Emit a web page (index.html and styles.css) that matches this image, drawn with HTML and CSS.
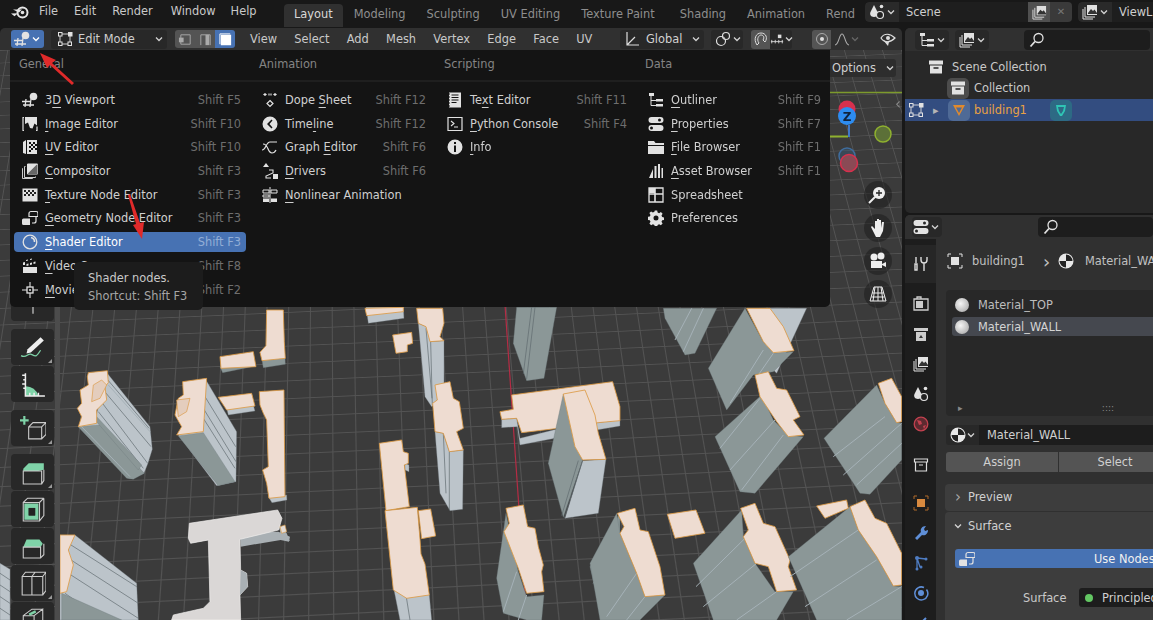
FILE: index.html
```html
<!DOCTYPE html>
<html lang="en">
<head>
<meta charset="utf-8">
<title>Blender</title>
<link rel="stylesheet" href="styles.css">
</head>
<body>
<svg class="defs" width="0" height="0">
  <defs>
    <symbol id="i-view" viewBox="0 0 16 16"><path d="M1 13h11M0 9.500h9M4 7l-1 8M9 7l-1 8" fill="none" stroke="currentColor" stroke-width="1.300"/><circle cx="11.500" cy="4.500" r="3.800" fill="currentColor"/></symbol>
    <symbol id="i-image" viewBox="0 0 16 16"><path d="M2 1.500H1v13h1M14 14.500h1v-4" fill="none" stroke="currentColor" stroke-width="1.200"/><path d="M3 1h12v8.500l-2.500-2-2 5-2.500-.5L6 6.500 3 8z" fill="currentColor"/></symbol>
    <symbol id="i-uv" viewBox="0 0 16 16"><path d="M1 3l3-2v14l-3-1z" fill="currentColor"/><path d="M5 1h10v14H5z" fill="currentColor"/><path d="M7 3h2v2H7zM11 3h2v2h-2zM9 5h2v2H9zM13 5h2v2h-2zM7 7h2v2H7zM11 7h2v2h-2zM9 9h2v2H9zM13 9h2v2h-2zM7 11h2v2H7z" fill="#111"/></symbol>
    <symbol id="i-comp" viewBox="0 0 16 16"><path d="M5.500 1h10v10h-10z" fill="#111" stroke="currentColor"/><path d="M5.500 11L15.500 1v10z" fill="#666"/><path d="M5.500 11V1h10z" fill="currentColor"/><path d="M3.500 3.500h-1v11h11v-1M1 5.500H.5v10h10V15" fill="none" stroke="currentColor" stroke-width=".9"/></symbol>
    <symbol id="i-tex" viewBox="0 0 16 16"><path d="M.5 1.500h15v13H.5z" fill="currentColor"/><path d="M2 3h2v2H2zM6 3h2v2H6zM10 3h2v2h-2zM4 5h2v2H4zM8 5h2v2H8zM12 5h2v2h-2zM2 7h2v2H2zM6 7h2v2H6zM10 7h2v2h-2z" fill="#222"/></symbol>
    <symbol id="i-geo" viewBox="0 0 16 16"><path d="M7 3.500a2 2 0 012-2h5a2 2 0 012 2v3H7z" fill="none" stroke="currentColor" stroke-width="1.200"/><path d="M0 10a1.500 1.500 0 011.500-1.500H8V15H1.500A1.500 1.500 0 010 13.500z" fill="currentColor"/><path d="M14 7v4a2 2 0 01-2 2h-2" fill="none" stroke="currentColor" stroke-width="1.200"/></symbol>
    <symbol id="i-shader" viewBox="0 0 16 16"><circle cx="8" cy="8" r="6.800" fill="none" stroke="currentColor" stroke-width="1.300"/><path d="M9 3.500a4.500 4.500 0 013.500 4.500" fill="none" stroke="currentColor" stroke-width="1.600"/></symbol>
    <symbol id="i-video" viewBox="0 0 16 16"><path d="M1 9h14v6H1z" fill="currentColor"/><path d="M1 7V4.500L3 4v3zM4.500 6l2-.5v2l-2 .5zM8 5l2-.5v2l-2 .5zM11.500 4l2-.5v2l-2 .5z" fill="currentColor"/><path d="M4 2.500l2-.5M8 1.500l2-.5" stroke="currentColor"/></symbol>
    <symbol id="i-movie" viewBox="0 0 16 16"><rect x="5" y="5" width="6" height="6" fill="none" stroke="currentColor" stroke-width="1.300"/><path d="M8 0v5M8 11v5M0 8h5M11 8h5" stroke="currentColor" stroke-width="1.100"/><circle cx="8" cy="8" r="1" fill="currentColor"/></symbol>
    <symbol id="i-dope" viewBox="0 0 16 16"><path d="M3 1l2 1.500L3 4 1 2.500zM13 1l2 1.500L13 4l-2-1.500z" fill="currentColor"/><path d="M6 1.500h4v2H6z" fill="#888"/><path d="M8 8.500l3 3-3 3-3-3z" fill="none" stroke="currentColor" stroke-width="1.200"/></symbol>
    <symbol id="i-time" viewBox="0 0 16 16"><path fill-rule="evenodd" d="M8 .5a7.500 7.500 0 100 15 7.500 7.500 0 000-15zM9.500 3.500L5 8l4.500 4.500 1-1L7.500 8l3-3.500z" fill="currentColor"/></symbol>
    <symbol id="i-graph" viewBox="0 0 16 16"><path d="M0 11c4 0 4-8 8-8h7M1 5c6 0 4 9 9 9 2 0 3-1 4-3" fill="none" stroke="currentColor" stroke-width="1.200"/></symbol>
    <symbol id="i-driver" viewBox="0 0 16 16"><path d="M4 0l3 4H1z" fill="currentColor"/><rect x="11" y="11" width="5" height="5" fill="currentColor"/><path d="M7 7h4v3l-7 3v2h5" fill="none" stroke="currentColor" stroke-width="1.100"/></symbol>
    <symbol id="i-nla" viewBox="0 0 16 16"><path d="M1 3h6v3H1zM9 3h6v3H9z" fill="none" stroke="currentColor"/><path d="M8 0v16" stroke="currentColor"/><path d="M1 8h6v2H1z" fill="none" stroke="currentColor"/><path d="M1 11.500h6V15H1zM9 11.500h6V15H9z" fill="currentColor"/></symbol>
    <symbol id="i-text" viewBox="0 0 16 16"><path d="M2 .5h12v15H2z" fill="currentColor"/><path d="M4.500 3h7M4.500 5.500h7M4.500 8h7M4.500 10.500h5" stroke="#111" stroke-width="1.100"/><path d="M2 2h1M2 5h1M2 8h1M2 11h1M2 14h1" stroke="#111"/></symbol>
    <symbol id="i-py" viewBox="0 0 16 16"><path d="M1 1.500h14v13H1z" fill="none" stroke="currentColor" stroke-width="1.200"/><path d="M4 5l3 2.500L4 10M7 11h4" fill="none" stroke="currentColor" stroke-width="1.100"/></symbol>
    <symbol id="i-info" viewBox="0 0 16 16"><path fill-rule="evenodd" d="M8 .5a7.500 7.500 0 100 15 7.500 7.500 0 000-15zM7 3h2v2H7zM7 6.500h2V13H7z" fill="currentColor"/></symbol>
    <symbol id="i-outl" viewBox="0 0 16 16"><path d="M1 1h5v3H1zM8 7h7v2.500H8zM8 12h7v2.500H8z" fill="currentColor"/><path d="M3 4v9.500h5M3 8.500h5" fill="none" stroke="currentColor"/></symbol>
    <symbol id="i-prop" viewBox="0 0 16 16"><path fill-rule="evenodd" d="M3.500 1h9a3 3 0 010 6h-9a3 3 0 010-6zM11.500 2.500a1.500 1.500 0 100 3 1.500 1.500 0 000-3zM3.500 9h9a3 3 0 010 6h-9a3 3 0 010-6zM3.500 10.500a1.500 1.500 0 100 3 1.500 1.500 0 000-3z" fill="currentColor"/></symbol>
    <symbol id="i-file" viewBox="0 0 16 16"><path d="M0 2h6l1.500 2H16v2H0zM0 7h16v8H0z" fill="currentColor"/></symbol>
    <symbol id="i-asset" viewBox="0 0 16 16"><path d="M1 15l4-9v9zM6.500 15V3h2v12zM10 15V1h2v14zM13.500 15V5H15v10z" fill="currentColor"/></symbol>
    <symbol id="i-sheet" viewBox="0 0 16 16"><path d="M1 1h14v14H1z" fill="none" stroke="currentColor" stroke-width="1.300"/><path d="M1 1h6v5H1z" fill="currentColor"/><path d="M1 7h14M7 1v14" stroke="currentColor" stroke-width="1.600"/></symbol>
    <symbol id="i-gear" viewBox="0 0 16 16"><path fill-rule="evenodd" d="M6.800.5h2.400l.4 2 1.500.7 1.800-1.100 1.700 1.700-1.100 1.800.7 1.500 2 .4v2.400l-2 .4-.7 1.500 1.100 1.800-1.700 1.700-1.800-1.100-1.500.7-.4 2H6.800l-.4-2-1.500-.7-1.800 1.100-1.700-1.700 1.100-1.800-.7-1.500-2-.4V6.800l2-.4.7-1.500-1.100-1.800 1.700-1.700 1.800 1.100 1.500-.7zM8 5.500a2.500 2.500 0 100 5 2.500 2.500 0 000-5z" fill="currentColor"/></symbol>
    <symbol id="i-chev" viewBox="0 0 10 10"><path d="M2 3.500L5 6.500 8 3.500" fill="none" stroke="currentColor" stroke-width="1.300"/></symbol>
    <symbol id="i-edit" viewBox="0 0 16 16"><path d="M5 3h6M5 13h6M3 5v6M13 5v6" stroke="currentColor" stroke-width=".9"/><rect x="1.500" y="1.500" width="3.500" height="3.500" fill="none" stroke="currentColor"/><rect x="11" y="1" width="4.500" height="4.500" fill="currentColor"/><rect x="1.500" y="11" width="3.500" height="3.500" fill="none" stroke="currentColor"/><rect x="11" y="11" width="3.500" height="3.500" fill="none" stroke="currentColor"/></symbol>
    <symbol id="i-obj" viewBox="0 0 16 16"><rect x="4" y="4" width="8" height="8" fill="currentColor"/><path d="M1 4V1h3M12 1h3v3M15 12v3h-3M4 15H1v-3" fill="none" stroke="currentColor"/></symbol>
    <symbol id="i-coll" viewBox="0 0 16 16"><path d="M1 1.500h14v4H1z" fill="currentColor"/><path d="M2 6.500h12v8H2z" fill="currentColor"/><path d="M5.500 9h5" stroke="#222" stroke-width="1.300"/></symbol>
    <symbol id="i-search" viewBox="0 0 16 16"><circle cx="9.500" cy="6" r="4.500" fill="none" stroke="currentColor" stroke-width="1.300"/><path d="M6 9.500L1.500 14.500" stroke="currentColor" stroke-width="1.800"/></symbol>
    <symbol id="i-layers" viewBox="0 0 16 16"><path d="M1 5v10h10M3 3v10h10" fill="none" stroke="currentColor"/><path d="M5 1h10v10H5z" fill="currentColor"/><path d="M6 9l3-4 2 2 1.500-1.500L15 9v1H6z" fill="#333"/></symbol>
    <symbol id="i-scene" viewBox="0 0 16 16"><path d="M5 1l3.500 7c1 2 0 5-3.500 5S.5 10 1.500 8z" fill="currentColor"/><circle cx="11" cy="11" r="3.500" fill="#222" stroke="currentColor" stroke-width="1.200"/><circle cx="12.500" cy="2.500" r="1.800" fill="currentColor"/></symbol>
    <symbol id="i-mat" viewBox="0 0 16 16"><circle cx="8" cy="8" r="7.500" fill="#e8e8e8"/><path d="M8 8h6.500A6.500 6.500 0 008 1.500zM8 8H1.500A6.500 6.500 0 008 14.500z" fill="#232323"/></symbol>
  </defs>
</svg>

<div class="app">
  <header class="topbar">
    <svg class="logo" viewBox="0 0 20 16"><circle cx="12.500" cy="8.500" r="5" fill="none" stroke="#e6e6e6" stroke-width="2"/><circle cx="12.500" cy="8.500" r="1.800" fill="#e6e6e6"/><path d="M1 9.500l7-.2-3.500 3zM3 5.500h9l-3 3z" fill="#e6e6e6"/></svg>
    <nav class="appmenu"><span>File</span><span>Edit</span><span>Render</span><span class="win">Window</span><span>Help</span></nav>
    <nav class="tabs">
      <span class="tab active">Layout</span><span class="tab">Modeling</span><span class="tab">Sculpting</span><span class="tab">UV Editing</span><span class="tab wide">Texture Paint</span><span class="tab">Shading</span><span class="tab">Animation</span><span class="tab">Rend</span>
    </nav>
    <div class="scenebox">
      <span class="iconbtn w34"><svg class="ic"><use href="#i-scene"/></svg><svg class="chev"><use href="#i-chev"/></svg></span>
      <span class="field w129">Scene</span>
      <span class="copy"><svg class="ic14"><use href="#i-layers"/></svg></span>
      <span class="close">✕</span>
    </div>
    <div class="scenebox second">
      <span class="iconbtn w34"><svg class="ic"><use href="#i-layers"/></svg><svg class="chev"><use href="#i-chev"/></svg></span>
      <span class="field grow">ViewL</span>
    </div>
  </header>

  <div class="main">
    <section class="viewport">
      <div class="vphead">
        <span class="edbtn"><svg class="ic"><use href="#i-view"/></svg><svg class="chev"><use href="#i-chev"/></svg></span>
        <span class="mode"><svg class="ic"><use href="#i-edit"/></svg><span class="modelabel">Edit Mode</span><svg class="chev"><use href="#i-chev"/></svg></span>
        <span class="selmodes">
          <i class="sm"><svg viewBox="0 0 16 16"><path d="M3 3h10v10H3z" fill="none" stroke="currentColor"/><rect x="1" y="6" width="5" height="5" fill="currentColor"/></svg></i>
          <i class="sm"><svg viewBox="0 0 16 16"><path d="M3 14V3h10v11" fill="none" stroke="currentColor"/><rect x="8" y="3" width="4" height="11" fill="currentColor"/></svg></i>
          <i class="sm on"><svg viewBox="0 0 16 16"><path d="M3 3h11v11H3z" fill="#fff"/><path d="M2 13V2h11" fill="none" stroke="#fff"/></svg></i>
        </span>
        <nav class="vpmenu"><span>View</span><span>Select</span><span>Add</span><span>Mesh</span><span>Vertex</span><span>Edge</span><span>Face</span><span>UV</span></nav>
        <span class="drop global"><svg class="ic"><path d="M3 1v13h12M3 14l8-8" fill="none" stroke="#ddd" stroke-width="1.200"/></svg><span>Global</span><svg class="chev"><use href="#i-chev"/></svg></span>
        <span class="drop link"><svg class="ic" viewBox="0 0 16 16"><circle cx="6" cy="10" r="4.500" fill="none" stroke="#ddd" stroke-width="1.200"/><circle cx="11" cy="5" r="3.500" fill="none" stroke="#ddd" stroke-width="1.200"/></svg><svg class="chev"><use href="#i-chev"/></svg></span>
        <span class="snap"><span class="snapon"><svg class="ic" viewBox="0 0 16 16"><path d="M4 14C0 8 3 2 8 2s7 5 4 9l-2-2c2-3 0-5-2-5S3 8 6 12z" fill="none" stroke="#ddd" stroke-width="1"/></svg></span><span class="snapoff"><svg class="ic" viewBox="0 0 16 16"><path d="M1 11h14M2 9v4M6 9v4M10 9v4M14 9v4" stroke="#ddd" fill="none"/><rect x="9" y="3" width="4" height="4" fill="#ddd"/></svg><svg class="chev"><use href="#i-chev"/></svg></span></span>
        <span class="prop"><span class="snapon"><svg class="ic" viewBox="0 0 16 16"><circle cx="8" cy="8" r="5.500" fill="none" stroke="#aaa"/><circle cx="8" cy="8" r="2" fill="#ddd"/></svg></span><svg class="ic fall" viewBox="0 0 16 16"><path d="M1 14c4 0 4-11 7-11s3 11 7 11" fill="none" stroke="#aaa" stroke-width="1.100"/></svg><svg class="chev dim"><use href="#i-chev"/></svg></span>
        <svg class="ic eye" viewBox="0 0 16 16"><path d="M1 7c3-5 9-5 14 0-5 5-11 5-14 0z" fill="none" stroke="#ddd" stroke-width="1.200"/><circle cx="8" cy="7" r="2" fill="#ddd"/><path d="M3 9l5 6 1-4z" fill="#ddd"/></svg>
      </div>

      <div class="scene">
        <div class="floor"></div>
        <svg class="buildings" viewBox="0 50 902 570">
          <path d="M505 305l22 320" stroke="#b52c45" stroke-width="1.200" fill="none"/>
          <path d="M830 92.500h72" stroke="#7d9a2c" stroke-width="1.500" fill="none"/>
          <path d="M830 136.500h18" stroke="#8fb12f" stroke-width="2" fill="none"/>
          <path d="M849 125v12" stroke="#3f78c8" stroke-width="2" fill="none"/>

          <g transform="translate(0 310) scale(.3333)">
            <path class="sl" d="M0 760l30 18v152H0z"/>
            <path class="ln" d="M0 790l30 20M0 825l30 20M0 860l30 20M0 895l30 20"/>

            <path class="sl" d="M322 190l128 160 7 68-13 42-12 30-35 16-15-2-147-154 55-40z"/>
            <path class="sd" d="M235 350l65-5 133 145-33 18-20-3z"/>
            <path class="ln" d="M315 200l132 155M310 240l143 170M300 270l143 190M295 305l135 170"/>
            <path class="lw" d="M325 225l125 140M240 345l150 155"/>
            <path class="sd" d="M290 320l135 145-10 15-130-150z"/>
            <path class="tp" d="M265 188l57-6 3 36-10 12 5 40-30 30v40l-55 10 10-30-13-25 13-15-5-40 25-15-3-25z"/>
            <path class="tpe" d="M280 225l25-15 15 15-20 40-25 10z"/>

            <path class="sl" d="M615 205l95 160-2 150-58 12-115-152z"/>
            <path class="sd" d="M535 378l75-10 95 147-50 12z"/>
            <path class="ln" d="M615 260l92 150M610 295l98 160M610 325l95 150"/>
            <path class="tp" d="M548 215l72-10-10 160-80 10 15-25-20-35 10-50 15-10z"/>
            <path class="tpe" d="M530 270l40-5-10 40-25 15z"/>

            <path class="sd" d="M660 170l105-5 3 3-100 20z"/>
            <path class="tp" d="M660 140l100-15 8 45-105 5z"/>
            <path class="sd" d="M785 145l70-5 1 23-66 10z"/>
            <path class="tp" d="M800 0h50l3 95 3 50-70 7-6-25 18-20z"/>
            <path class="sl" d="M680 295l80-10 5 18-80 12z"/>
            <path class="tp" d="M655 262l100-12 10 38-85 12z"/>
            <path class="sl" d="M805 560l55-5 1 15-45 8z"/>
            <path class="tp" d="M778 245l74-5 3 320-48 5-7-45-12-40 17-10-5-140-10-20-10-25z"/>

            <path class="sw" d="M565 680l7 20 55-10-2-15zM720 665l115 0 35 15-3 15-25-5-120 20zM835 640l25 30 10 22-25-6z"/>
            <path class="wt" d="M568 640l265-40 13 25-10 35-116 28 2 92 18 10 3 40-23 25 2 75H515l5-15 90-20 20-20-5-185-53 10-7-15z"/>
            <path class="sw" d="M722 780l18 10 3 40-23 25z"/>
            <path class="wl" d="M840 650l15-5 5 20-15 5z"/>

            <path class="sl" d="M180 675h45l185 145 5 110H180z"/>
            <path class="ln" d="M205 700l205 130M205 745l210 135M205 790l210 135M195 850l115 80"/>
            <path class="sd" d="M185 850l180 80H185z"/>
            <path class="tp" d="M180 675h45l-20 45 15 45-20 80-20 5z"/>
          </g>

          <g transform="translate(300 300) scale(.3333)">
            <path class="sl" d="M198 22h112l2 33-107 15z"/>
            <path class="tp" d="M195 25l115-3v13L200 47z"/>
            <path class="tp" d="M278 105l57-8 3 33-16 5v20l-34 5z"/>
            <path class="sl" d="M355 70l25 10 12 45 40-3v158l-37 40-20-30z"/>
            <path class="ln" d="M378 85l18 210M392 125l5 190"/>
            <path class="tp" d="M350 25h78l4 45-12 40 12 12-42 3-12-45-23-10z"/>

            <path class="sl" d="M405 395l25 5 18 55 42-5-2 178-38 4-30-52z"/>
            <path class="ln" d="M430 400l8 180M448 455v175"/>
            <path class="tp" d="M405 255l45-10 10 50 18 10 12 80-20 10 20 55-42 5-18-55-25-5-7-85 14-10z"/>

            <path class="sl" d="M315 490l12 5v20l-12-5z"/>
            <path class="tp" d="M238 430l67-10 5 35 15 5v30l-12 5 15 125-70 12z"/>
            <path class="sl" d="M280 860l108 25 7 75H300z"/>
            <path class="ln" d="M318 885l12 75"/>
            <path class="tp" d="M255 632l97-10 8 95 3 45 12 30 13 93-68 10-40-25z"/>
            <path class="tp" d="M355 632l37-5 15 81-42 8z"/>

            <path class="sl" d="M605 358l45-3 10 60 100-25 135-22 65-8v18l-70 12-125 25-105 20-8-55-47 3z"/>
            <path class="tp" d="M635 285l303-40 22 75v42l-65 6-120 17-110 13-15-43-45 3-5-23 40-7z"/>
            <path class="sd" d="M790 282l58 198-58 172-45-162z"/>
            <path class="sl" d="M848 482l70-4-23 162-100 15z"/>
            <path class="ln" d="M835 482l-50 165M848 482l-55 172"/>
            <path class="tp" d="M790 282l65-12 30 75 10 55 23 78-70 2-23-40z"/>

            <path class="sd" d="M650 22h120l-38 213-52 7-40-112z"/>
            <path class="ln" d="M695 22l-25 200M705 22l-25 215"/>

            <path class="sd" d="M618 640l-28 195 20 105 70 20h45l7-75-52 5-25-75z"/>
            <path class="lw" d="M650 815l-40 120M680 885l-25 75"/>
            <path class="tp" d="M618 625l52-10 13 65 22 5 10 55 15 55-5 20 7 60-52 5-25-75-43-110 16-25z"/>

            <path class="sd" d="M870 800l90-160v320l-55-10z"/>
            <path class="lw" d="M880 850l80-100M905 950l55-70"/>
          </g>

          <g transform="translate(620 300) scale(.3333)">
            <path class="sd" d="M130 25h160l-65 135-30 5-60-110z"/>
            <path class="lw" d="M215 25l-50 95M250 25l-60 130"/>
            <path class="sl" d="M450 25h110l-90 195-40-40z"/>
            <path class="sd" d="M375 25l-110 180 55 125 80-105 60-10 60-60-60 5-30-35z"/>
            <path class="lw" d="M430 150l-100 160M460 160l-45 65"/>
            <path class="tp" d="M380 25h70l40 55 32 72-62 6-30-33z"/>

            <path class="sd" d="M425 285L285 410l75 165 45 5 145-170-45-5-45-45z"/>
            <path class="lw" d="M465 360L330 510M490 405L365 570M420 295L300 445"/>
            <path class="tp" d="M405 225l40-10 25 50 30 5 40 80-20 10 32 45-47 5-35-45-50-75z"/>

            <path class="sd" d="M770 255L612 415l108 165 30 3 95-103V370l-15-2-35-58z"/>
            <path class="lw" d="M795 350L640 470M845 370L670 525M845 430L710 555"/>
            <path class="tp" d="M775 250l40-15 30 55v75l-15 3-35-58z"/>

            <path class="sd" d="M-10 640L-90 790l30 170H60l75-75-60 5-25-70-50-120z"/>
            <path class="lw" d="M50 820L-40 950M75 890L20 960"/>
            <path class="tp" d="M-8 640l53-15 15 65 25 5 35 105 15 85-60 5-25-70-50-120 12-20z"/>

            <path class="tp" d="M142 643l86-13 27 70-90 15z"/>

            <path class="sd" d="M365 630L220 790l60 170h190l50-85-55 0-60-85-35-80z"/>
            <path class="lw" d="M375 715L228 860M410 790L250 920M470 875L350 960"/>
            <path class="tp" d="M362 625l43-15 25 60 35 10 45 100-5 20 25 70-60 5-25-75-40-10-35-80 15-20z"/>

            <path class="sd" d="M690 620L505 770l85 190h255v-100l-25-2-50-88-55-80z"/>
            <path class="lw" d="M715 690L510 830M770 780L555 920M845 860L680 960"/>
            <path class="tp" d="M590 618l90-18 5 25-70 30z"/>
            <path class="tp" d="M690 620l45-20 30 55 35 15 45 90v95l-25 3-50-88-55-80z"/>
          </g>
        </svg>

        <div class="strip"></div>
        <div class="tools">
          <div class="tool"><svg class="t" viewBox="0 0 24 24"><path d="M12 2v20M2 12h20" stroke="#ddd"/></svg></div>
          <div class="toolgroup">
            <div class="tool more"><svg class="t" viewBox="0 0 24 24"><path d="M7 14L19 3l3 3L10 17l-4 1z" fill="#eee"/><path d="M1 20c5 3 6-3 10-1s4 2 8-4" fill="none" stroke="#7fd3a8" stroke-width="1.200"/></svg></div>
            <div class="tool"><svg class="t" viewBox="0 0 24 24"><path d="M5 14a12 12 0 0112 9H5z" fill="#7fd3a8"/><path d="M5 2v21h18M2 4h3M3 8h2M2 12h3M3 16h2M9 23v-3M13 23v-3M17 23v-3" fill="none" stroke="#eee" stroke-width="1.400"/></svg></div>
          </div>
          <div class="toolgroup">
            <div class="tool more"><svg class="t" viewBox="0 0 24 24"><path d="M8 11h12v11H8zM8 11l4-4h12l-4 4M24 7v11l-4 4" fill="none" stroke="#ccc"/><path d="M4 1v8M0 5h8" stroke="#7fd3a8" stroke-width="2"/></svg></div>
          </div>
          <div class="toolgroup">
            <div class="tool more"><svg class="t" viewBox="0 0 24 24"><path d="M3 9l5-5h14v6l-5 1H3z" fill="#7fd3a8"/><path d="M3 11h17v12H3zM20 23l2-3V10" fill="none" stroke="#ccc"/></svg></div>
            <div class="tool"><svg class="t" viewBox="0 0 24 24"><path d="M3 6h15v17H3zM18 6l4-4M22 2v16l-4 5M3 6l4-4h15" fill="none" stroke="#ccc"/><path d="M4 7h13l-3 4H8v7l-4 4zM17 7v15H4l4-4h6v-7z" fill="#7fd3a8"/><path d="M8 11h6v7H8z" fill="#222"/></svg></div>
            <div class="tool"><svg class="t" viewBox="0 0 24 24"><path d="M3 13l3-7h12l3 4-2 3z" fill="#7fd3a8"/><path d="M3 13h16v10H3zM19 23l3-3V10" fill="none" stroke="#ccc"/></svg></div>
            <div class="tool more"><svg class="t" viewBox="0 0 24 24"><path d="M2 6h9v17H2zM11 6h10v17H11zM2 6l3-4h19l-3 4M24 2v17l-3 4M11 6l3-4" fill="none" stroke="#ccc"/></svg></div>
            <div class="tool"><svg class="t" viewBox="0 0 24 24"><path d="M3 8h10v15H3zM13 8l8-6v15l-8 6M3 8l8-6h10" fill="none" stroke="#ccc"/><path d="M8 6l6-3 1 2-6 3z" fill="#7fd3a8"/></svg></div>
          </div>
        </div>

        <div class="options">Options <svg class="chev"><use href="#i-chev"/></svg></div>

        <svg class="gizmo" viewBox="0 0 70 90">
          <circle cx="17" cy="57" r="8" fill="#3a5a7a" fill-opacity=".45" stroke="#3f6d9e" stroke-width="1.500"/>
          <circle cx="19" cy="64" r="8.500" fill="#8a4a55" stroke="#d8304e" stroke-width="1.500"/>
          <circle cx="17" cy="10" r="8.500" fill="#d8304e"/>
          <circle cx="53" cy="35" r="8" fill="#5c7038" stroke="#8fb12f" stroke-width="1.500"/>
          <circle cx="17" cy="17" r="9" fill="#2d8cf0"/>
          <text x="17" y="21.500" class="gz">Z</text>
        </svg>

        <div class="navs">
          <span class="nav"><svg viewBox="0 0 20 20"><circle cx="11" cy="8" r="6" fill="#eee"/><path d="M7 12l-6 6" stroke="#eee" stroke-width="2"/><path d="M8 8h6M11 5v6" stroke="#222" stroke-width="1.300"/></svg></span>
          <span class="nav"><svg viewBox="0 0 20 20"><path d="M3 9l1-1 3 3V3h2v6V1h2v8-7h2v8l1-6h2l-1 9-3 6H8z" fill="#eee"/></svg></span>
          <span class="nav"><svg viewBox="0 0 20 20"><circle cx="6" cy="6" r="3.500" fill="#eee"/><circle cx="13" cy="5" r="3.500" fill="#eee"/><path d="M3 10h11v7H3zM14 13l4-2v5l-4-2z" fill="#eee"/></svg></span>
          <span class="nav"><svg viewBox="0 0 20 20"><path d="M6 3h8l4 14H2zM10 3v14M4.500 9h11M3.500 13h13M7 3l-2 14M13 3l2 14" fill="none" stroke="#eee"/></svg></span>
        </div>
        <span class="collapse">‹</span>
      </div>

      <div class="menu">
        <div class="menuhead"><span>General</span><span>Animation</span><span>Scripting</span><span>Data</span></div>
        <div class="menubody">
          <div class="col">
            <div class="row"><svg class="ic"><use href="#i-view"/></svg><span class="lb">3<u>D</u> Viewport</span><span class="sc">Shift F5</span></div>
            <div class="row"><svg class="ic"><use href="#i-image"/></svg><span class="lb"><u>I</u>mage Editor</span><span class="sc">Shift F10</span></div>
            <div class="row"><svg class="ic"><use href="#i-uv"/></svg><span class="lb"><u>U</u>V Editor</span><span class="sc">Shift F10</span></div>
            <div class="row"><svg class="ic"><use href="#i-comp"/></svg><span class="lb"><u>C</u>ompositor</span><span class="sc">Shift F3</span></div>
            <div class="row"><svg class="ic"><use href="#i-tex"/></svg><span class="lb"><u>T</u>exture Node Editor</span><span class="sc">Shift F3</span></div>
            <div class="row"><svg class="ic"><use href="#i-geo"/></svg><span class="lb"><u>G</u>eometry Node Editor</span><span class="sc">Shift F3</span></div>
            <div class="row hot"><svg class="ic"><use href="#i-shader"/></svg><span class="lb"><u>S</u>hader Editor</span><span class="sc">Shift F3</span></div>
            <div class="row"><svg class="ic"><use href="#i-video"/></svg><span class="lb"><u>V</u>ideo Sequencer</span><span class="sc">Shift F8</span></div>
            <div class="row"><svg class="ic"><use href="#i-movie"/></svg><span class="lb"><u>M</u>ovie Clip Editor</span><span class="sc">Shift F2</span></div>
          </div>
          <div class="col">
            <div class="row"><svg class="ic"><use href="#i-dope"/></svg><span class="lb">Dope <u>S</u>heet</span><span class="sc">Shift F12</span></div>
            <div class="row"><svg class="ic"><use href="#i-time"/></svg><span class="lb">Time<u>l</u>ine</span><span class="sc">Shift F12</span></div>
            <div class="row"><svg class="ic"><use href="#i-graph"/></svg><span class="lb">Graph <u>E</u>ditor</span><span class="sc">Shift F6</span></div>
            <div class="row"><svg class="ic"><use href="#i-driver"/></svg><span class="lb"><u>D</u>rivers</span><span class="sc">Shift F6</span></div>
            <div class="row"><svg class="ic"><use href="#i-nla"/></svg><span class="lb"><u>N</u>onlinear Animation</span></div>
          </div>
          <div class="col">
            <div class="row"><svg class="ic"><use href="#i-text"/></svg><span class="lb">Te<u>x</u>t Editor</span><span class="sc">Shift F11</span></div>
            <div class="row"><svg class="ic"><use href="#i-py"/></svg><span class="lb"><u>P</u>ython Console</span><span class="sc">Shift F4</span></div>
            <div class="row"><svg class="ic"><use href="#i-info"/></svg><span class="lb"><u>I</u>nfo</span></div>
          </div>
          <div class="col">
            <div class="row"><svg class="ic"><use href="#i-outl"/></svg><span class="lb"><u>O</u>utliner</span><span class="sc">Shift F9</span></div>
            <div class="row"><svg class="ic"><use href="#i-prop"/></svg><span class="lb"><u>P</u>roperties</span><span class="sc">Shift F7</span></div>
            <div class="row"><svg class="ic"><use href="#i-file"/></svg><span class="lb"><u>F</u>ile Browser</span><span class="sc">Shift F1</span></div>
            <div class="row"><svg class="ic"><use href="#i-asset"/></svg><span class="lb"><u>A</u>sset Browser</span><span class="sc">Shift F1</span></div>
            <div class="row"><svg class="ic"><use href="#i-sheet"/></svg><span class="lb">Spreadsheet</span></div>
            <div class="row"><svg class="ic"><use href="#i-gear"/></svg><span class="lb">Preferences</span></div>
          </div>
        </div>
      </div>

      <div class="tooltip"><p>Shader nodes.</p><p class="dim">Shortcut: Shift F3</p></div>

      <svg class="arrows" viewBox="0 0 200 240">
        <path d="M74 83L52 63l4-3-16-7 7 15 3-3 22 20z" fill="#e02a2a"/>
        <path d="M128 195l8 29-3 1 9 14 2-17-4 1-10-29z" fill="#e02a2a"/>
      </svg>
    </section>

    <aside class="side">
      <section class="outliner">
        <div class="panelhead">
          <span class="iconbtn w34"><svg class="ic"><use href="#i-outl"/></svg><svg class="chev"><use href="#i-chev"/></svg></span>
          <span class="iconbtn w34"><svg class="ic"><use href="#i-layers"/></svg><svg class="chev"><use href="#i-chev"/></svg></span>
          <span class="search o"><svg class="ic"><use href="#i-search"/></svg></span>
        </div>
        <div class="tree">
          <div class="node n0"><svg class="ic"><use href="#i-coll"/></svg><span>Scene Collection</span></div>
          <div class="node n1"><span class="badge"><svg class="ic"><use href="#i-coll"/></svg></span><span>Collection</span></div>
          <div class="node sel">
            <svg class="ic"><use href="#i-edit"/></svg>
            <span class="tri">▸</span>
            <span class="badge or"><svg class="ic" viewBox="0 0 16 16"><path d="M2 3h12L8 14zM5 5.500h6L8 11z" fill="#e08a2d" fill-rule="evenodd"/></svg></span>
            <span class="objname">building1</span>
            <span class="badge tq"><svg class="ic" viewBox="0 0 16 16"><path d="M3 3h10l-1 6-3 5H7L4 9zM5 5l1 4 2 3 2-3 1-4z" fill="#2fc5b5" fill-rule="evenodd"/></svg></span>
          </div>
        </div>
      </section>
      <section class="props">
        <div class="panelhead p">
          <span class="iconbtn w34"><svg class="ic"><use href="#i-prop"/></svg><svg class="chev"><use href="#i-chev"/></svg></span>
          <span class="search p"><svg class="ic"><use href="#i-search"/></svg></span>
        </div>
        <div class="propbody">
          <nav class="proptabs">
            <span class="ptab first"><svg class="ic"><path d="M3 1v6M2 8h2v6H2zM11 7v8M8 1v3a3 3 0 006 0V1" fill="none" stroke="#ddd" stroke-width="1.400"/></svg></span>
            <span class="ptab g1"><svg class="ic" viewBox="0 0 16 16"><path d="M1 3h14v11H1zM4 1h4v2H4z" fill="none" stroke="#ccc" stroke-width="1.300"/><path d="M3 5h7v7H3z" fill="#ccc"/></svg></span>
            <span class="ptab"><svg class="ic" viewBox="0 0 16 16"><path d="M1 2h14v3H1zM3 6h10v9H3z" fill="#ccc"/><path d="M6 12l2-3 2 3z" fill="#333"/></svg></span>
            <span class="ptab"><svg class="ic"><use href="#i-layers"/></svg></span>
            <span class="ptab"><svg class="ic"><use href="#i-scene"/></svg></span>
            <span class="ptab"><svg class="ic" viewBox="0 0 16 16"><circle cx="8" cy="8" r="6.800" fill="#5c2a30" stroke="#c2414f" stroke-width="1.300"/><path d="M4 4l4 1 1 3-3 1zM10 10l3-1-2 4z" fill="#c2414f"/></svg></span>
            <span class="ptab g2"><svg class="ic" viewBox="0 0 16 16"><path d="M1.500 2h13v3h-13zM2.500 5v9h11V5M6 8h4" fill="none" stroke="#ddd" stroke-width="1.200"/></svg></span>
            <span class="ptab g3"><svg class="ic" viewBox="0 0 16 16"><rect x="4" y="4" width="8" height="8" fill="#d98a3f"/><path d="M1 4V1h3M12 1h3v3M15 12v3h-3M4 15H1v-3" fill="none" stroke="#b06a2a"/></svg></span>
            <span class="ptab"><svg class="ic" viewBox="0 0 16 16"><path d="M2 13L8 7c-1-3 1-6 5-6l-2 3 1 2 3-1c0 4-3 6-6 5l-5 5z" fill="#5f8fd8"/></svg></span>
            <span class="ptab"><svg class="ic" viewBox="0 0 16 16"><path d="M4 3l9 1M4 3l3 9M4 3v11" stroke="#4e7cc2" stroke-width="1.300" fill="none"/><circle cx="4" cy="3" r="2" fill="#4e7cc2"/><circle cx="13" cy="4" r="1.500" fill="#4e7cc2"/><circle cx="8" cy="12" r="1.500" fill="#4e7cc2"/><circle cx="4" cy="14" r="1.500" fill="#4e7cc2"/></svg></span>
            <span class="ptab"><svg class="ic" viewBox="0 0 16 16"><circle cx="8" cy="8" r="3" fill="#5f8fd8"/><path d="M11 2.500a6.500 6.500 0 10 2.500 2" fill="none" stroke="#5f8fd8" stroke-width="1.500"/></svg></span>
            <span class="ptab"><svg class="ic" viewBox="0 0 16 16"><path d="M2 14L13 3" stroke="#5f8fd8" stroke-width="2"/></svg></span>
          </nav>
          <div class="propmain">
            <div class="crumb">
              <svg class="ic"><use href="#i-obj"/></svg><span class="crumbname">building1</span><span class="arrowr">›</span><svg class="ic"><use href="#i-mat"/></svg><span class="crumbmat">Material_WALL</span>
            </div>
            <div class="matlist">
              <div class="matrow"><span class="ball"></span>Material_TOP</div>
              <div class="matrow on"><span class="ball"></span>Material_WALL</div>
              <div class="listfoot"><span>▸</span><span class="grip">::::</span></div>
            </div>
            <div class="matfield">
              <span class="matbtn"><svg class="ic"><use href="#i-mat"/></svg><svg class="chev"><use href="#i-chev"/></svg></span>
              <span class="matname">Material_WALL</span>
            </div>
            <div class="assign"><span>Assign</span><span>Select</span></div>
            <div class="panel closed"><span class="pchev">›</span>Preview</div>
            <div class="panel open">
              <div class="ptitle"><svg class="chev"><use href="#i-chev"/></svg>Surface</div>
              <div class="usenodes"><svg class="ic"><use href="#i-geo"/></svg><span>Use Nodes</span></div>
              <div class="surfrow"><span class="surflabel">Surface</span><span class="surffield"><i class="dot"></i>Principled BSDF</span></div>
            </div>
          </div>
        </div>
      </section>
    </aside>
  </div>
</div>
</body>
</html>
```
FILE: styles.css
```css
* { box-sizing: border-box; }
html, body { margin: 0; padding: 0; background: #181818; }
body { font-family: "DejaVu Sans", sans-serif; font-size: 11.400px; color: #d2d2d2; }
.defs { position: absolute; }
u { text-decoration: underline; text-underline-offset: 3px; text-decoration-thickness: 1px; }
.app { width: 1153px; height: 620px; overflow: hidden; display: flex; flex-direction: column; }
.ic { width: 16px; height: 16px; flex: none; color: #e2e2e2; }
.ic14 { width: 15px; height: 15px; color: #ddd; }
.chev { width: 10px; height: 10px; flex: none; color: #d2d2d2; }
.chev.dim { color: #666; }

.topbar { height: 28px; flex: none; display: flex; background: #181818; align-items: flex-start; }
.logo { width: 20px; height: 16px; margin: 4px 0 0 10px; flex: none; }
.appmenu { display: flex; gap: 16px; padding: 4px 0 0 9px; height: 22px; line-height: 15px; color: #c9c9c9; flex: none; width: 254px; }
.win { margin: 0 -1px 0 2px; }
.tabs { display: flex; width: 581px; gap: 1px; overflow: hidden; flex: none; height: 27px; padding-top: 4px; }
.tab { padding: 0 10px; height: 23px; line-height: 21px; color: #8e8e8e; border-radius: 4px 4px 0 0; flex: none; white-space: nowrap; }
.tab.wide { padding-right: 14px; }
.tab.active { background: #303030; color: #d8d8d8; }
.scenebox { display: flex; height: 20px; margin-top: 2px; border-radius: 4px; overflow: hidden; flex: none; }
.scenebox.second { margin-left: 6px; width: 90px; }
.iconbtn { display: inline-flex; align-items: center; justify-content: center; gap: 1px; height: 20px; background: #2a2a2a; border-radius: 4px; }
.scenebox .iconbtn { border-radius: 4px 0 0 4px; }
.w34 { width: 34px; }
.field { background: #1e1e1e; height: 20px; line-height: 20px; padding-left: 7px; color: #cfcfcf; white-space: nowrap; }
.w129 { width: 129px; }
.grow { flex: 1; }
.copy { width: 22px; height: 20px; background: #505050; display: flex; align-items: center; justify-content: center; }
.close { width: 22px; height: 20px; line-height: 20px; background: #3a3a3a; color: #777; text-align: center; font-size: 10px; }

.main { flex: 1; display: flex; min-height: 0; }
.viewport { width: 902px; flex: none; position: relative; display: flex; flex-direction: column; }
.vphead { height: 22px; flex: none; background: #303030; display: flex; align-items: center; padding-left: 11px; border-radius: 5px 5px 0 0; overflow: hidden; }
.edbtn { width: 33px; height: 18px; background: #4772b3; border-radius: 3px; display: flex; align-items: center; justify-content: center; gap: 1px; flex: none; }
.edbtn .chev { color: #fff; }
.mode { margin-left: 7px; width: 116px; height: 19px; background: #282828; border-radius: 3px; display: flex; align-items: center; padding: 0 3px 0 6px; flex: none; }
.modelabel { margin-left: 5px; flex: 1; color: #cfcfcf; }
.selmodes { margin-left: 8px; display: flex; gap: 0; flex: none; }
.sm { width: 20px; height: 18px; background: #545454; display: flex; align-items: center; justify-content: center; color: #aaa; }
.sm:first-child { border-radius: 3px 0 0 3px; }
.sm:last-child { border-radius: 0 3px 3px 0; }
.sm svg { width: 15px; height: 15px; }
.sm.on { background: #4772b3; }
.vpmenu { display: flex; margin-left: 7px; flex: none; }
.vpmenu span { padding: 0 8.650px; color: #c9c9c9; }
.vpmenu span:first-child { padding-left: 8px; }
.drop { height: 19px; background: #282828; border-radius: 3px; display: flex; align-items: center; flex: none; }
.global { margin-left: 19px; width: 84px; padding: 0 3px 0 4px; gap: 6px; }
.global span { flex: 1; }
.link { margin-left: 7px; width: 32px; padding-left: 4px; gap: 1px; }
.snap { margin-left: 8px; display: flex; flex: none; align-items: center; height: 19px; }
.snapon { width: 19px; height: 19px; background: #545454; display: flex; align-items: center; justify-content: center; border-radius: 3px 0 0 3px; }
.snapoff { width: 22px; height: 19px; background: #282828; display: flex; align-items: center; border-radius: 0 3px 3px 0; }
.snapoff .ic { width: 14px; }
.prop { margin-left: 20px; display: flex; align-items: center; height: 19px; flex: none; }
.fall { margin-left: 3px; }
.eye { margin-left: 20px; }

.scene { flex: 1; position: relative; overflow: hidden; background: #3b3b3b; }
.floor { position: absolute; left: -900px; right: -900px; top: -700px; bottom: -700px;
  background-image:
    repeating-linear-gradient(0deg, #535353 0 1px, transparent 1px 20px),
    repeating-linear-gradient(90deg, #535353 0 1px, transparent 1px 22px);
  transform: perspective(1300px) rotateX(32deg) rotateZ(-3deg); }
.buildings { position: absolute; left: 0; top: 0; width: 902px; height: 570px; }
.tp { fill: #eedcd1; stroke: #dc9a45; stroke-width: 2.500; stroke-linejoin: round; }
.tpe { fill: #e4cdbd; stroke: #dc9a45; stroke-width: 2; }
.sl { fill: #bcc4ca; stroke: #6f7a80; stroke-width: 1; }
.sd { fill: #8b9797; stroke: #6a7678; stroke-width: 1; }
.ln { fill: none; stroke: #5d686d; stroke-width: 2; }
.lw { fill: none; stroke: #a6b2b8; stroke-width: 3; }
.wt { fill: #dad7d6; stroke: #f2f0ef; stroke-width: 2; }
.sw { fill: #a9b0b4; }
.wl { fill: #e4ddd8; stroke: #d69a4a; stroke-width: 2; }

.strip { position: absolute; left: 55px; top: 0; bottom: 0; width: 5px; background: #4c4c4c; }
.tools { position: absolute; left: 11px; top: 235px; width: 43px; display: flex; flex-direction: column; gap: 8px; }
.toolgroup { display: flex; flex-direction: column; gap: 1px; }
.tool { height: 36px; background: #282828; border-radius: 4px; display: flex; align-items: center; justify-content: center; position: relative; }
.tool.more::after { content: ""; position: absolute; right: 2px; bottom: 2px; border-style: solid; border-width: 0 0 4px 4px; border-color: transparent transparent #999 transparent; }
.t { width: 26px; height: 26px; }
.options { position: absolute; left: 830px; top: 9px; width: 66px; height: 18px; background: #2d2d2d; border-radius: 0 3px 3px 0; display: flex; align-items: center; padding-left: 2px; gap: 9px; color: #cfcfcf; }
.gizmo { position: absolute; left: 830px; top: 49px; width: 70px; height: 90px; }
.gz { font-size: 12px; font-weight: bold; text-anchor: middle; fill: #10233c; font-family: "DejaVu Sans", sans-serif; }
.navs { position: absolute; left: 864px; top: 131px; display: flex; flex-direction: column; gap: 5px; }
.nav { width: 28px; height: 28px; border-radius: 50%; background: rgba(30, 30, 30, .55); display: flex; align-items: center; justify-content: center; }
.nav svg { width: 20px; height: 20px; }
.collapse { position: absolute; left: 895px; top: 45px; font-size: 15px; color: #8a8a8a; line-height: 18px; }

.menu { position: absolute; left: 10px; top: 22px; width: 820px; height: 257px; background: #141414; border-radius: 0 0 5px 5px; padding: 0 4px; }
.menuhead { display: grid; grid-template-columns: 232px 177px 193px 186px; column-gap: 8px; height: 32px; line-height: 28px; margin: 0 -4px; padding: 0 4px; border-bottom: 2px solid #1f1f1f; color: #848484; }
.menuhead span { padding-left: 5px; }
.menubody { display: grid; grid-template-columns: 232px 177px 193px 186px; column-gap: 8px; padding-top: 8px; }
.col { display: flex; flex-direction: column; gap: 3.700px; }
.row { height: 20px; display: flex; align-items: center; padding: 0 5px 0 8px; border-radius: 4px; color: #d0d0d0; }
.lb { margin-left: 7px; flex: 1; white-space: nowrap; }
.sc { color: #6e6e6e; }
.hot { background: #4772b3; color: #fff; }
.hot .sc { color: #93aed6; }
.tooltip { position: absolute; left: 74px; top: 234px; width: 129px; height: 48px; background: #1c1c1c; border-radius: 5px; padding: 8px 0 0 14px; color: #c8c8c8; }
.tooltip p { margin: 0 0 2px; line-height: 16px; }
.tooltip .dim { color: #a6a6a6; }
.arrows { position: absolute; left: 0; top: -28px; width: 200px; height: 240px; pointer-events: none; }

.side { width: 251px; flex: none; display: flex; flex-direction: column; gap: 2px; background: #181818; padding-left: 3px; }
.outliner { height: 185px; flex: none; background: #282828; border-radius: 5px 0 0 5px; overflow: hidden; }
.panelhead { height: 23px; background: #303030; display: flex; align-items: center; padding-left: 10px; gap: 6px; }
.panelhead .iconbtn { background: #282828; height: 20px; }
.search { background: #1d1d1d; height: 20px; border-radius: 4px; display: flex; align-items: center; padding-left: 5px; }
.search.o { margin-left: 29px; width: 126px; }
.search.p { margin-left: 90px; width: 130px; }
.tree { padding-top: 5px; }
.node { height: 21.500px; display: flex; align-items: center; color: #c9c9c9; }
.n0 { padding-left: 23px; gap: 8px; }
.n1 { padding-left: 42px; gap: 5px; }
.badge { width: 22px; height: 21px; border-radius: 5px; background: #4c4c4c; display: flex; align-items: center; justify-content: center; flex: none; }
.sel { background: #334d80; padding-left: 3px; height: 22px; }
.tri { margin: 0 0 0 9px; width: 15px; color: #b5b5b5; font-size: 11px; }
.badge.or { background: #4f6a96; }
.objname { color: #e9a144; margin: 0 0 0 4px; width: 76px; }
.badge.tq { background: #2d6a84; }

.props { flex: 1; background: #303030; border-radius: 5px 0 0 0; overflow: hidden; display: flex; flex-direction: column; min-height: 0; }
.panelhead.p { padding-left: 7px; height: 24px; }
.propbody { flex: 1; display: flex; min-height: 0; }
.proptabs { width: 31px; flex: none; background: #1d1d1d; display: flex; flex-direction: column; align-items: center; padding-top: 6px; }
.ptab { width: 31px; height: 30px; flex: none; display: flex; align-items: center; justify-content: center; }
.ptab.first { height: 38px; background: #262626; }
.ptab.g1 { margin-top: 6px; }
.ptab.g2 { margin-top: 11px; }
.ptab.g3 { margin-top: 8px; }
.propmain { width: 300px; flex: none; padding: 0 0 0 10px; }
.crumb { height: 44px; display: flex; align-items: center; gap: 0; color: #c0c0c0; padding-left: 1px; white-space: nowrap; }
.crumbname { width: 62px; flex: none; margin-left: 9px; }
.crumbmat { margin-left: 11px; }
.arrowr { width: 24px; flex: none; font-size: 18px; padding-left: 9px; }
.matlist { height: 126px; background: #282828; border-radius: 4px; padding: 5px 0 0 6px; position: relative; margin-top: 7px; }
.matrow { height: 19px; margin-bottom: 3px; display: flex; align-items: center; padding-left: 3px; color: #bdbdbd; gap: 9px; border-radius: 3px; }
.matrow.on { background: #45484f; color: #d4d4d4; }
.ball { width: 14px; height: 14px; border-radius: 50%; background: radial-gradient(circle at 40% 40%, #f5f5f5, #9e9e9e); flex: none; }
.listfoot { position: absolute; left: 12px; bottom: 3px; width: 156px; display: flex; justify-content: space-between; font-size: 9px; color: #888; }
.matfield { display: flex; height: 20px; margin-top: 9px; }
.matbtn { width: 33px; background: #282828; border-radius: 3px 0 0 3px; display: flex; align-items: center; justify-content: center; }
.matname { flex: 1; background: #1d1d1d; line-height: 20px; padding-left: 8px; color: #cfcfcf; }
.assign { display: grid; grid-template-columns: 112px 187px; gap: 1px; height: 20px; margin-top: 7px; }
.assign span { background: #545454; text-align: center; line-height: 20px; color: #d0d0d0; }
.assign span:first-child { border-radius: 3px 0 0 3px; }
.assign span:last-child { padding-right: 75px; }
.panel { background: #3d3d3d; border-radius: 4px; margin-left: -1px; color: #d0d0d0; }
.panel.closed { height: 27px; margin-top: 12px; line-height: 27px; padding-left: 10px; display: flex; gap: 6px; }
.pchev { color: #aaa; font-size: 15px; width: 7px; }
.panel.open { margin-top: 1px; height: 120px; padding: 0 0 0 8px; }
.ptitle { height: 27px; display: flex; align-items: center; gap: 5px; }
.usenodes { margin: 10px 0 0 2px; height: 19px; background: #4772b3; border-radius: 3px; display: flex; align-items: center; padding-left: 4px; color: #f0f0f0; position: relative; }
.usenodes span { margin-left: 119px; }
.surfrow { margin-top: 20px; display: flex; align-items: center; }
.surflabel { margin-left: 70px; color: #c9c9c9; width: 56px; }
.surffield { background: #1d1d1d; height: 19px; display: flex; align-items: center; gap: 9px; padding-left: 6px; flex: 1; color: #d0d0d0; white-space: nowrap; border-radius: 3px; }
.dot { width: 8px; height: 8px; border-radius: 50%; background: #63c763; flex: none; }
```
